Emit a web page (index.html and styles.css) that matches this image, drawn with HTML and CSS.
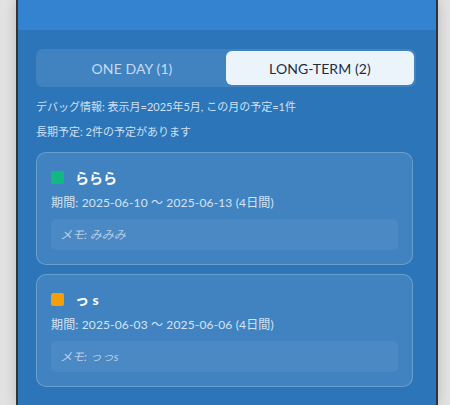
FILE: index.html
```html
<!DOCTYPE html>
<html lang="ja">
<head>
<meta charset="utf-8">
<link rel="stylesheet" href="styles.css">
</head>
<body>
<div class="frame">
  <div class="header"></div>
  <div class="content">
    <div class="tabs">
      <div class="tab">ONE DAY (1)</div>
      <div class="tab active">LONG-TERM (2)</div>
    </div>
    <p class="debug">デバッグ情報: 表示月=2025年5月, この月の予定=1件</p>
    <p class="debug">長期予定: 2件の予定があります</p>
    <div class="card">
      <div class="card-title"><span class="dot green"></span><span class="name">ららら</span></div>
      <div class="period">期間: 2025-06-10 〜 2025-06-13 (4日間)</div>
      <div class="memo">メモ: みみみ</div>
    </div>
    <div class="card">
      <div class="card-title"><span class="dot orange"></span><span class="name">っ s</span></div>
      <div class="period">期間: 2025-06-03 〜 2025-06-06 (4日間)</div>
      <div class="memo">メモ: っっs</div>
    </div>
  </div>
</div>
</body>
</html>
```

FILE: styles.css
```css
html, body {
  margin: 0;
  padding: 0;
  height: 100%;
}
body {
  background: #e2e2e2;
  font-family: "Lato", "Noto Sans CJK JP", sans-serif;
  overflow: hidden;
}
.frame {
  margin-left: 16px;
  width: 418px;
  height: 405px;
  border-left: 2px solid #333;
  border-right: 2px solid #333;
  background: #2c75b9;
  box-shadow: 0 0 12px rgba(0,0,0,0.18);
}
.header {
  height: 30px;
  background: #3383d0;
}
.content {
  padding: 19px 20px 0 18px;
}
.tabs {
  display: flex;
  padding: 2px;
  border-radius: 7px;
  background: rgba(255,255,255,0.1);
  height: 34px;
}
.tab {
  flex: 1;
  display: flex;
  align-items: center;
  justify-content: center;
  font-size: 14px;
  letter-spacing: 0.1px;
  color: #c6dbf1;
  border-radius: 6px;
}
.tab.active {
  background: #ebf4fb;
  color: #1f2d3d;
}
.debug {
  margin: 0;
  font-size: 11px;
  color: #cfe0f2;
  line-height: 14px;
}
.debug:first-of-type {
  margin-top: 13px;
}
.debug + .debug {
  margin-top: 11px;
}
.card {
  margin: 0 3px 9px 0;
  border: 1px solid rgba(255,255,255,0.22);
  border-radius: 10px;
  background: rgba(255,255,255,0.1);
  padding: 15px 14px 14px 14px;
}
.content .debug + .card {
  margin-top: 13px;
}
.card-title {
  display: flex;
  align-items: center;
  gap: 11px;
  height: 18px;
}
.dot {
  width: 13px;
  height: 13px;
  border-radius: 2px;
}
.green { background: #10b981; }
.orange { background: #f59e0b; }
.name {
  font-size: 14px;
  font-weight: bold;
  color: #ffffff;
}
.period {
  margin-top: 9px;
  font-size: 12px;
  letter-spacing: 0.15px;
  color: #d3e3f4;
  line-height: 16px;
}
.memo {
  margin-top: 8px;
  background: rgba(255,255,255,0.05);
  border-radius: 5px;
  padding: 8px 9px;
  font-size: 12px;
  font-style: italic;
  line-height: 15px;
  color: rgba(255,255,255,0.6);
}
```
